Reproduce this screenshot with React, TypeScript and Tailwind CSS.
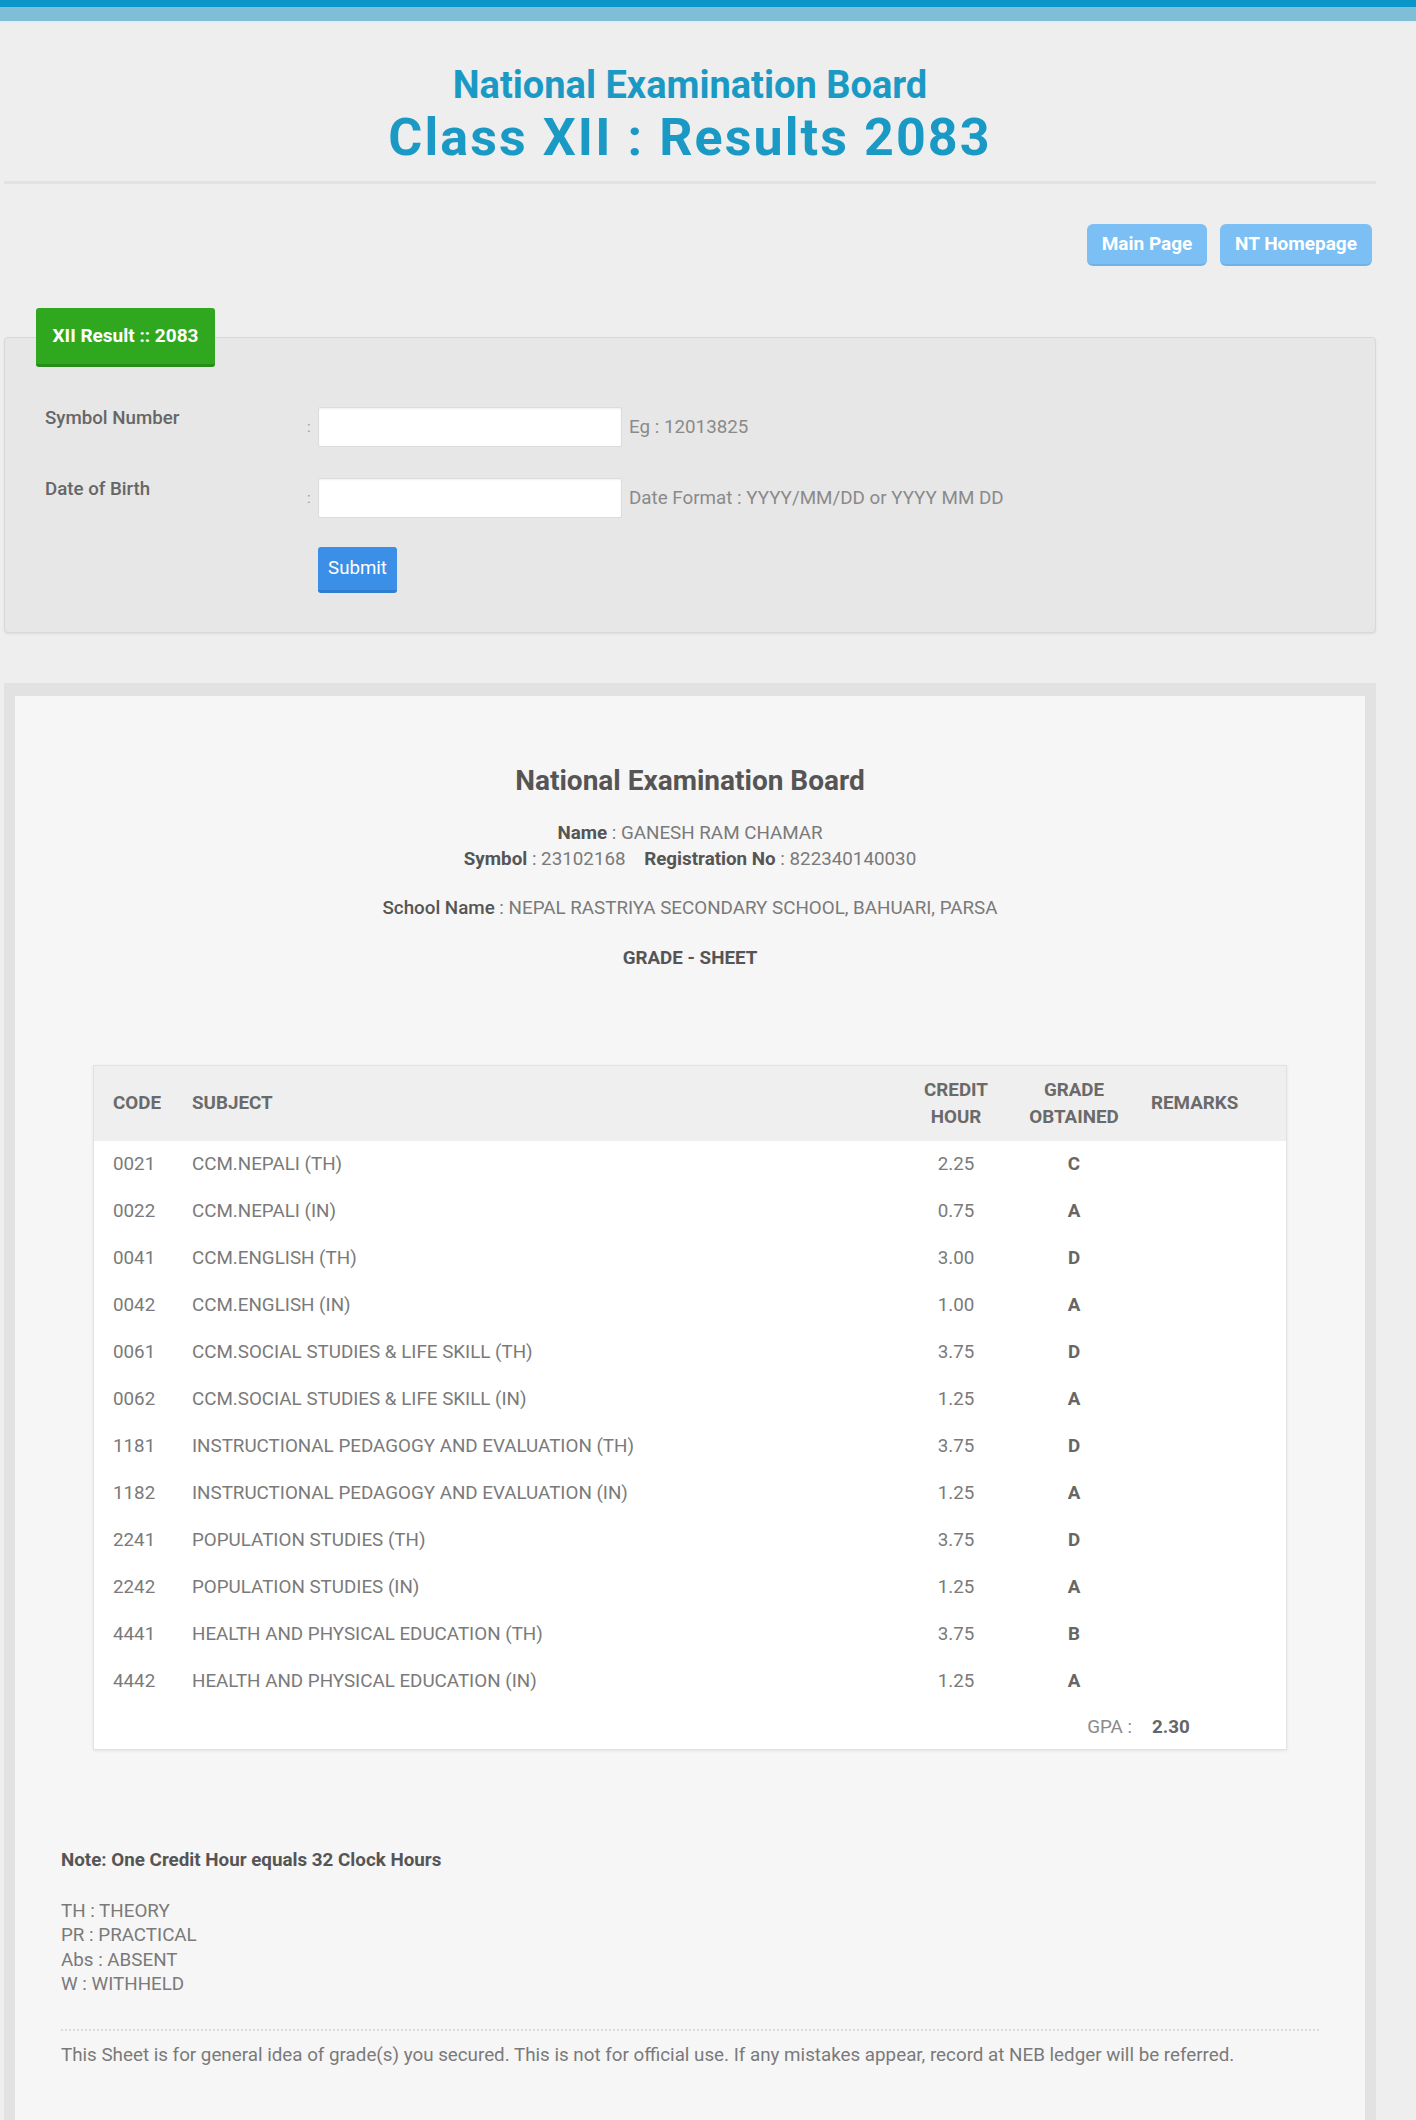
import React from 'react';

const rows: [string, string, string, string][] = [
  ['0021', 'CCM.NEPALI (TH)', '2.25', 'C'],
  ['0022', 'CCM.NEPALI (IN)', '0.75', 'A'],
  ['0041', 'CCM.ENGLISH (TH)', '3.00', 'D'],
  ['0042', 'CCM.ENGLISH (IN)', '1.00', 'A'],
  ['0061', 'CCM.SOCIAL STUDIES & LIFE SKILL (TH)', '3.75', 'D'],
  ['0062', 'CCM.SOCIAL STUDIES & LIFE SKILL (IN)', '1.25', 'A'],
  ['1181', 'INSTRUCTIONAL PEDAGOGY AND EVALUATION (TH)', '3.75', 'D'],
  ['1182', 'INSTRUCTIONAL PEDAGOGY AND EVALUATION (IN)', '1.25', 'A'],
  ['2241', 'POPULATION STUDIES (TH)', '3.75', 'D'],
  ['2242', 'POPULATION STUDIES (IN)', '1.25', 'A'],
  ['4441', 'HEALTH AND PHYSICAL EDUCATION (TH)', '3.75', 'B'],
  ['4442', 'HEALTH AND PHYSICAL EDUCATION (IN)', '1.25', 'A'],
];

const cols = 'grid grid-cols-[98px_714px_100px_136px_144px]';

function FormRow({ label, hint }: { label: string; hint: string }) {
  return (
    <div className="flex items-start">
      <label className="w-[262px] text-[18.7px] leading-[22px] font-medium text-[#666]">{label}</label>
      <span className="w-[11px] pt-[10px] text-[15px] leading-[20px] text-[#999]">:</span>
      <input
        type="text"
        className="w-[304px] h-[40px] bg-white border border-[#dcdcdc] rounded-[2px] shadow-[inset_0_1px_2px_rgba(0,0,0,0.06)]"
      />
      <span className="pl-[7px] pt-[10px] text-[18.8px] leading-[20px] text-[#8a8a8a]">{hint}</span>
    </div>
  );
}

export default function App() {
  return (
    <div className="min-h-[2120px] bg-[#eeeeee] font-['Roboto',_'Liberation_Sans',_sans-serif]">
      <div className="h-[7px] bg-[#0a96c8]" />
      <div className="h-[14px] bg-[#80bdd6]" />
      <div className="h-[2px] bg-[#e4edf1]" />

      <div className="w-[1372px] ml-[4px]">
        <header className="pt-[40px] pb-[12px] border-b-[3px] border-[#e2e2e2] text-center text-[#1b99c5]">
          <h1 className="text-[38px] leading-[44px] font-bold">National Examination Board</h1>
          <h2 className="text-[52px] leading-[62px] font-bold tracking-[0.04em]">Class XII : Results 2083</h2>
        </header>

        <div className="flex justify-end gap-[13px] pt-[40px] pr-[4px]">
          <button className="w-[120px] h-[42px] rounded-[6px] bg-[#7bbff5] border-b-[2px] border-[#6fb2e8] text-white text-[19px] font-bold">
            Main Page
          </button>
          <button className="w-[152px] h-[42px] rounded-[6px] bg-[#7bbff5] border-b-[2px] border-[#6fb2e8] text-white text-[19px] font-bold">
            NT Homepage
          </button>
        </div>

        <div className="mt-[42px]">
          <div className="relative z-10 ml-[32px] w-[179px] h-[59px] -mb-[30px] flex items-center justify-center rounded-[3px] bg-[#2fa81f] border-b-[3px] border-[#268e18] text-white text-[19px] font-bold">
            XII Result :: 2083
          </div>
          <div className="h-[296px] bg-[#e7e7e7] border border-[#d8d8d8] rounded-[4px] shadow-[0_1px_2px_rgba(0,0,0,0.08)] pl-[40px] pt-[69px] flex flex-col gap-[31px]">
            <FormRow label="Symbol Number" hint="Eg : 12013825" />
            <FormRow label="Date of Birth" hint="Date Format : YYYY/MM/DD or YYYY MM DD" />
            <div className="pl-[273px] -mt-[2px]">
              <button className="w-[79px] h-[46px] rounded-[3px] bg-[#3c8fe6] border-b-[3px] border-[#2f7dd0] text-white text-[18.7px]">
                Submit
              </button>
            </div>
          </div>
        </div>

        <div className="mt-[50px] bg-[#e2e2e2] pt-[13px] pl-[11px] pr-[11px]">
          <div className="bg-[#f6f6f6] pt-[68px] pb-[90px]">
            <div className="text-center">
              <h3 className="text-[28px] leading-[34px] font-bold text-[#555]">National Examination Board</h3>
              <div className="mt-[22px] text-[18.8px] leading-[26px] text-[#7a7a7a]">
                <div>
                  <b className="text-[#555]">Name</b> : GANESH RAM CHAMAR
                </div>
                <div>
                  <b className="text-[#555]">Symbol</b> : 23102168 &nbsp;&nbsp;&nbsp;<b className="text-[#555]">Registration No</b> : 822340140030
                </div>
                <div className="mt-[23px]">
                  <b className="text-[#555] font-medium">School Name</b> : NEPAL RASTRIYA SECONDARY SCHOOL, BAHUARI, PARSA
                </div>
                <div className="mt-[24px] font-bold text-[#555]">GRADE - SHEET</div>
              </div>
            </div>

            <div className="mx-[78px] mt-[94px] bg-white border border-[#e2e2e2] shadow-[0_1px_3px_rgba(0,0,0,0.08)]">
              <div className={`${cols} h-[75px] items-center bg-[#efefef] text-[18.8px] leading-[27px] font-bold text-[#6a6a6a]`}>
                <div className="pl-[19px]">CODE</div>
                <div>SUBJECT</div>
                <div className="text-center">CREDIT<br />HOUR</div>
                <div className="text-center">GRADE<br />OBTAINED</div>
                <div className="pl-[9px]">REMARKS</div>
              </div>
              {rows.map(([code, subject, credit, grade]) => (
                <div key={code} className={`${cols} h-[47px] items-center text-[18.8px] text-[#7a7a7a]`}>
                  <div className="pl-[19px]">{code}</div>
                  <div>{subject}</div>
                  <div className="text-center">{credit}</div>
                  <div className="text-center font-bold text-[#666]">{grade}</div>
                  <div />
                </div>
              ))}
              <div className={`${cols} h-[44px] items-center text-[18.8px]`}>
                <div />
                <div />
                <div />
                <div className="text-right pr-[10px] text-[#8a8a8a]">GPA :</div>
                <div className="pl-[10px] font-bold text-[#666]">2.30</div>
              </div>
            </div>

            <div className="px-[46px] mt-[98px] text-[18.8px] leading-[24.6px] text-[#7a7a7a]">
              <p className="font-bold text-[#555]">Note: One Credit Hour equals 32 Clock Hours</p>
              <div className="mt-[26px]">
                <p>TH : THEORY</p>
                <p>PR : PRACTICAL</p>
                <p>Abs : ABSENT</p>
                <p>W : WITHHELD</p>
              </div>
              <div className="mt-[32px] border-t-[2px] border-dotted border-[#dcdcdc] w-[1258px]" />
              <p className="mt-[12px]">
                This Sheet is for general idea of grade(s) you secured. This is not for official use. If any mistakes appear, record at NEB ledger will be referred.
              </p>
            </div>
          </div>
        </div>
      </div>
    </div>
  );
}
